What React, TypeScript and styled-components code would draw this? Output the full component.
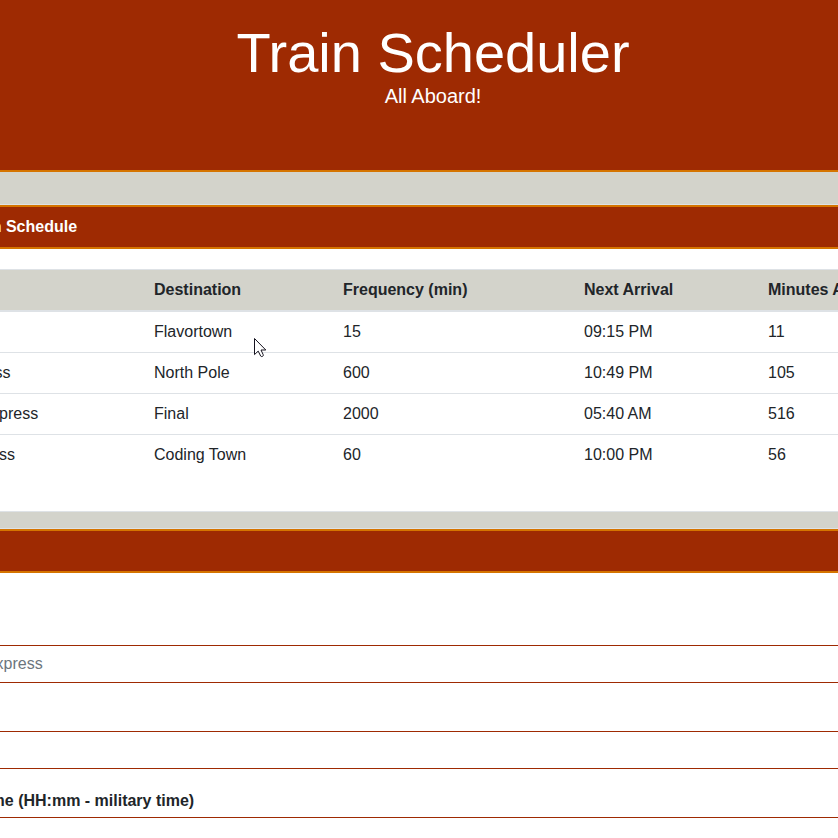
import React from "react";
import styled, { createGlobalStyle } from "styled-components";

const rust = "#9e2a02";
const amber = "#d57400";
const stone = "#d3d3cb";
const line = "#dee2e6";

const GlobalStyle = createGlobalStyle`
  *, *::before, *::after { box-sizing: border-box; }
  body {
    margin: 0;
    background: ${stone};
    color: #212529;
    font: 400 16px/24px "Liberation Sans", Arial, sans-serif;
  }
`;

const Page = styled.div`
  position: relative;
  height: 100vh;
  overflow: hidden;
`;

const Container = styled.div`
  margin: 0 -150px 0 -122px;
`;

const Banner = styled.header`
  height: 172px;
  padding-top: 19px;
  background: ${rust};
  border-bottom: 2px solid ${amber};
  color: #fff;
  text-align: center;
`;

const Title = styled.h1`
  margin: 0;
  font-size: 56px;
  font-weight: 400;
  line-height: 67px;
`;

const Tagline = styled.p`
  margin: 0;
  font-size: 20px;
  line-height: 20px;
`;

const Cards = styled.main`
  display: flex;
  flex-direction: column;
  gap: 16px;
  padding-top: 32px;
`;

const Card = styled.section`
  background: #fff;
  border: 1px solid ${line};
`;

const CardHeader = styled.h2`
  margin: 0;
  padding: 8px 22px;
  background: ${rust};
  border: solid ${amber};
  border-width: 2px 0;
  color: #fff;
  font-size: 16px;
  font-weight: 700;
  line-height: 24px;
`;

const CardBody = styled.div`
  padding: 20px;
`;

const Table = styled.table`
  width: 100%;
  margin-bottom: 16px;
  table-layout: fixed;
  border-collapse: separate;
  border-spacing: 0;
`;

const HeadCell = styled.th<{ $width?: number }>`
  width: ${(p) => (p.$width ? `${p.$width}px` : "auto")};
  padding: 8px 12px;
  background: ${stone};
  border-top: 1px solid ${line};
  border-bottom: 2px solid ${line};
  text-align: left;
`;

const Cell = styled.td`
  padding: 8px 12px;
  border-top: 1px solid ${line};

  tbody tr:first-child & {
    border-top: 0;
  }
`;

const Form = styled.form`
  display: flex;
  flex-direction: column;
  gap: 20px;
  padding-top: 24px;
`;

const Field = styled.div`
  display: flex;
  flex-direction: column;
  gap: 4px;
`;

const Label = styled.label`
  font-weight: 700;
`;

const Input = styled.input`
  width: 100%;
  height: 38px;
  padding: 6px 12px;
  background: #fff;
  border: 1px solid ${rust};
  border-radius: 4px;
  color: #495057;
  font: inherit;

  &::placeholder {
    color: #6c757d;
    opacity: 1;
  }
`;

const Pointer = styled.svg`
  position: absolute;
  left: 254px;
  top: 338px;
  width: 13px;
  height: 20px;
  pointer-events: none;
`;

const columns: { label: string; width?: number }[] = [
  { label: "Train Name", width: 243 },
  { label: "Destination", width: 189 },
  { label: "Frequency (min)", width: 241 },
  { label: "Next Arrival", width: 184 },
  { label: "Minutes Away" },
];

const trains = [
  ["Trolley", "Flavortown", "15", "09:15 PM", "11"],
  ["Polar Express", "North Pole", "600", "10:49 PM", "105"],
  ["Southern Express", "Final", "2000", "05:40 AM", "516"],
  ["Coast Express", "Coding Town", "60", "10:00 PM", "56"],
];

const fields = [
  { id: "train-name", label: "Train Name", placeholder: "e.g. Polar Express" },
  { id: "destination", label: "Destination" },
  { id: "first-time", label: "First Train time (HH:mm - military time)" },
];

export default function App() {
  return (
    <>
      <GlobalStyle />
      <Page>
        <Container>
          <Banner>
            <Title>Train Scheduler</Title>
            <Tagline>All Aboard!</Tagline>
          </Banner>
          <Cards>
            <Card>
              <CardHeader>Current Train Schedule</CardHeader>
              <CardBody>
                <Table>
                  <thead>
                    <tr>
                      {columns.map((c) => (
                        <HeadCell key={c.label} scope="col" $width={c.width}>
                          {c.label}
                        </HeadCell>
                      ))}
                    </tr>
                  </thead>
                  <tbody>
                    {trains.map((row) => (
                      <tr key={row[0]}>
                        {row.map((value, i) => (
                          <Cell key={i}>{value}</Cell>
                        ))}
                      </tr>
                    ))}
                  </tbody>
                </Table>
              </CardBody>
            </Card>
            <Card>
              <CardHeader>Add Train</CardHeader>
              <CardBody>
                <Form>
                  {fields.map((f) => (
                    <Field key={f.id}>
                      <Label htmlFor={f.id}>{f.label}</Label>
                      <Input id={f.id} type="text" placeholder={f.placeholder} />
                    </Field>
                  ))}
                </Form>
              </CardBody>
            </Card>
          </Cards>
        </Container>
        <Pointer viewBox="0 0 13 20" aria-hidden="true">
          <path
            d="M.5.5V16.6L4.2 13.1L6.7 18.1Q7.6 19 8.8 18.2Q9.6 17.6 9.2 16.7L7 12H11.8Z"
            fill="#fff"
            stroke="#15131f"
            strokeWidth="1"
            strokeLinejoin="round"
          />
        </Pointer>
      </Page>
    </>
  );
}
